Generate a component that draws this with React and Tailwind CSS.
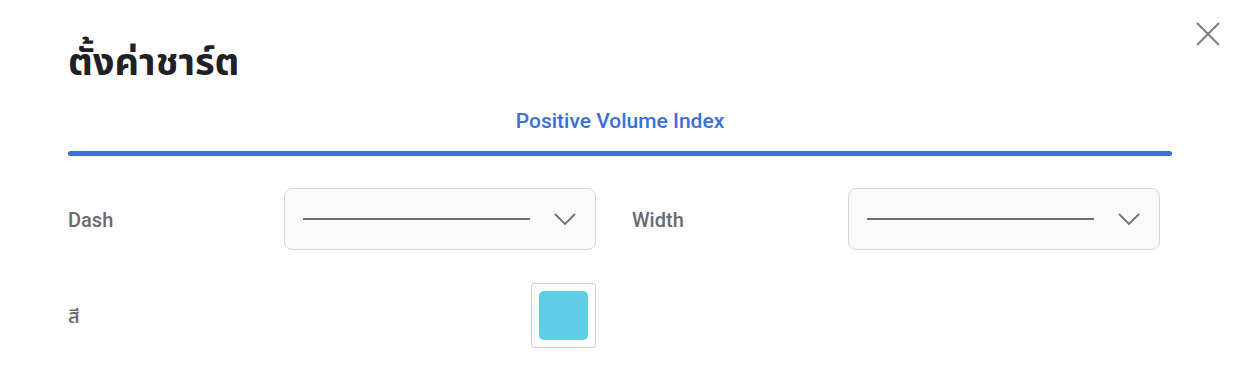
import React from "react";

const ChevronDown = () => (
    <svg width="22" height="12" viewBox="0 0 22 12" fill="none">
        <path d="M1 1l10 10L21 1" stroke="#6b7280" strokeWidth="1.8" />
    </svg>
);

const LineSelect = () => (
    <div className="w-[312px] h-[62px] rounded-[8px] border border-[#d6d6d9] bg-[#fafafa] flex items-center pl-[18px] pr-[19px]">
        <div className="w-[227px] h-[2px] bg-[#6f6f6f]"></div>
        <div className="ml-auto flex items-center">
            <ChevronDown />
        </div>
    </div>
);

export default function App() {
    return (
        <div
            className="relative w-full h-[384px] bg-white pl-[68px] pr-[72px]"
            style={{ fontFamily: "Roboto, 'Noto Sans Thai', 'Noto Sans', sans-serif" }}
        >
            <button className="absolute top-[22px] right-[24px] w-[24px] h-[24px] flex items-center justify-center">
                <svg width="24" height="24" viewBox="0 0 24 24" fill="none">
                    <path d="M1 1l22 22M23 1L1 23" stroke="#7a7d86" strokeWidth="2" />
                </svg>
            </button>

            <h1 className="pt-[34px] text-[38px] leading-[56px] font-bold text-[#1f2125]">
                ตั้งค่าชาร์ต
            </h1>

            <div className="mt-[16px] flex justify-center">
                <span className="text-[21px] leading-[30px] font-medium text-[#3b6fd6]">
                    Positive Volume Index
                </span>
            </div>
            <div className="mt-[15px] h-[5px] rounded-full bg-[#3d6fd6]"></div>

            <div className="mt-[32px] grid grid-cols-2 gap-x-[36px] pr-[12px]">
                <div className="flex items-center">
                    <span className="w-[216px] pt-[2px] text-[20px] font-medium text-[#676a72]">Dash</span>
                    <LineSelect />
                </div>
                <div className="flex items-center">
                    <span className="w-[216px] pt-[2px] text-[20px] font-medium text-[#676a72]">Width</span>
                    <LineSelect />
                </div>
            </div>

            <div className="mt-[33px] grid grid-cols-2 gap-x-[36px] pr-[12px]">
                <div className="flex items-center">
                    <span className="w-[216px] text-[20px] font-medium text-[#676a72]">สี</span>
                    <div className="w-[312px] flex justify-end">
                        <div className="w-[65px] h-[65px] rounded-[3px] border border-[#d0d0d4] flex items-center justify-center">
                            <div className="w-[49px] h-[49px] rounded-[5px] bg-[#5fcde6]"></div>
                        </div>
                    </div>
                </div>
            </div>
        </div>
    );
}
